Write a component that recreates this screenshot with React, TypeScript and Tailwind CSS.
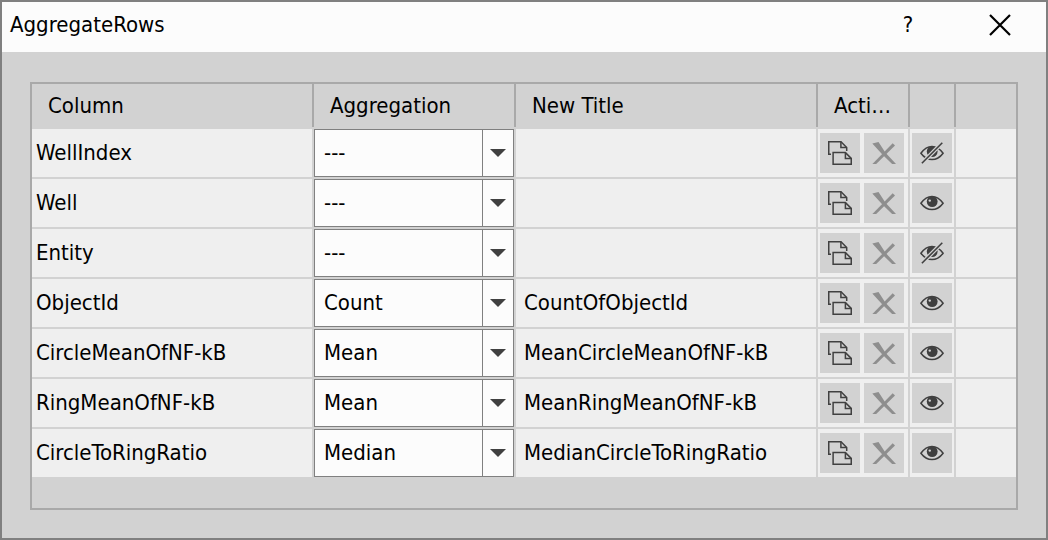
import { useState } from "react";

type Row = { column: string; aggregation: string; title: string; visible: boolean };

const OPTIONS = ["---", "Count", "Mean", "Median"];

const INITIAL_ROWS: Row[] = [
  { column: "WellIndex", aggregation: "---", title: "", visible: false },
  { column: "Well", aggregation: "---", title: "", visible: true },
  { column: "Entity", aggregation: "---", title: "", visible: false },
  { column: "ObjectId", aggregation: "Count", title: "CountOfObjectId", visible: true },
  { column: "CircleMeanOfNF-kB", aggregation: "Mean", title: "MeanCircleMeanOfNF-kB", visible: true },
  { column: "RingMeanOfNF-kB", aggregation: "Mean", title: "MeanRingMeanOfNF-kB", visible: true },
  { column: "CircleToRingRatio", aggregation: "Median", title: "MedianCircleToRingRatio", visible: true },
];

const HEADERS = ["Column", "Aggregation", "New Title", "Acti…", "", ""];

function CopyIcon() {
  return (
    <svg viewBox="0 0 24 24" className="size-6" fill="none" stroke="#404040" strokeWidth="1.5" aria-hidden="true">
      <path d="M3 13.2H.75V.75H13L18.7 6.6V10" />
      <path d="M12.9.75V6.6H18.7" />
      <path d="M5.1 11.6H17.4L23.25 17.4V23.25H5.1Z" />
      <path d="M17.4 11.6V17.4H23.25" />
    </svg>
  );
}

function DeleteIcon() {
  return (
    <svg viewBox="0 0 24 24" className="size-6" fill="#8e8e8e" aria-hidden="true">
      <path d="M.3 2.4 6.5 1 13.3 11.6 24 23H20.1L10.6 13.8Z" />
      <path d="M20.7 2.2 23 4.5 4.2 23H.4Z" />
    </svg>
  );
}

function EyeIcon({ crossed }: { crossed: boolean }) {
  return (
    <svg viewBox="0 0 24 24" className="size-6" fill="none" aria-hidden="true">
      <path
        d="M.9 12.2C4.2 7.6 8 5.4 12 5.4S19.8 7.6 23.1 12.2C19.8 16.6 16 18.6 12 18.6S4.2 16.6.9 12.2Z"
        stroke="#404040"
        strokeWidth="1.5"
      />
      <circle cx="12.2" cy="10.6" r="5.4" fill="#404040" />
      {crossed ? (
        <>
          <path d="M22.3 1.7 1.9 22.3" stroke="#d2d2d2" strokeWidth="4" />
          <path d="M22.3 1.7 1.9 22.3" stroke="#404040" strokeWidth="1.6" />
        </>
      ) : (
        <circle cx="9.8" cy="9.6" r="1.2" fill="#d2d2d2" />
      )}
    </svg>
  );
}

const iconButton = "flex size-10 items-center justify-center bg-[#d2d2d2]";

export default function App() {
  const [rows, setRows] = useState(INITIAL_ROWS);
  const update = (index: number, patch: Partial<Row>) =>
    setRows(rows.map((row, i) => (i === index ? { ...row, ...patch } : row)));

  return (
    <div className="flex min-h-screen flex-col border-2 border-[#808080] bg-[#d2d2d2] font-['DejaVu_Sans_Condensed','Noto_Sans',sans-serif] text-[22px] leading-7 text-black">
      <header className="flex h-[50px] items-center bg-[#fcfcfc] pb-1 pl-2">
        <h1 className="flex-1">AggregateRows</h1>
        <button type="button" aria-label="Help" className="flex h-full w-[92px] items-center justify-center">
          ?
        </button>
        <button type="button" aria-label="Close" className="flex h-full w-[92px] items-center justify-center">
          <svg viewBox="0 0 22 22" className="size-[22px]" stroke="#000" strokeWidth="2.2" aria-hidden="true">
            <path d="M1 1 21 21M21 1 1 21" />
          </svg>
        </button>
      </header>

      <main className="flex flex-1 flex-col px-7 pt-[30px] pb-7">
        <div className="flex-1 border-2 border-[#a9a9a9]">
          <table className="w-full table-fixed border-separate border-spacing-0">
            <colgroup>
              <col className="w-[282px]" />
              <col className="w-[202px]" />
              <col />
              <col className="w-[92px]" />
              <col className="w-[46px]" />
              <col className="w-[60px]" />
            </colgroup>
            <thead>
              <tr>
                {HEADERS.map((label, i) => (
                  <th key={i} scope="col" className="h-[45px] p-0 pb-0.5 text-left font-normal">
                    <div
                      className={
                        i < HEADERS.length - 1
                          ? "flex h-[43px] items-center border-r-2 border-[#a9a9a9] pl-4"
                          : "h-[43px]"
                      }
                    >
                      {label}
                    </div>
                  </th>
                ))}
              </tr>
            </thead>
            <tbody className="bg-[#efefef] [&_td]:border-[#d2d2d2] [&_td]:p-0 [&_td:not(:last-child)]:border-r-2 [&_tr:not(:last-child)>td]:border-b-2">
              {rows.map((row, i) => (
                <tr key={row.column}>
                  <td>
                    <div className="pl-1">{row.column}</div>
                  </td>
                  <td>
                    <div className="relative h-12">
                      <select
                        aria-label={`Aggregation for ${row.column}`}
                        value={row.aggregation}
                        onChange={(e) => update(i, { aggregation: e.target.value })}
                        className="size-full appearance-none border border-[#808080] bg-[#fcfcfc] pr-9 pl-[9px]"
                      >
                        {OPTIONS.map((option) => (
                          <option key={option}>{option}</option>
                        ))}
                      </select>
                      <span className="pointer-events-none absolute inset-y-px right-px flex w-[31px] items-center justify-center border-l border-[#808080]">
                        <svg viewBox="0 0 16 8" className="h-2 w-4" fill="#404040" aria-hidden="true">
                          <path d="M0 0H16L8 8Z" />
                        </svg>
                      </span>
                    </div>
                  </td>
                  <td>
                    <div className="pl-2">{row.title}</div>
                  </td>
                  <td>
                    <div className="flex gap-1 pl-0.5">
                      <button type="button" aria-label={`Duplicate ${row.column}`} className={iconButton}>
                        <CopyIcon />
                      </button>
                      <button type="button" disabled aria-label={`Delete ${row.column}`} className={iconButton}>
                        <DeleteIcon />
                      </button>
                    </div>
                  </td>
                  <td>
                    <div className="pl-0.5">
                      <button
                        type="button"
                        aria-label={`Show ${row.column}`}
                        aria-pressed={row.visible}
                        onClick={() => update(i, { visible: !row.visible })}
                        className={iconButton}
                      >
                        <EyeIcon crossed={!row.visible} />
                      </button>
                    </div>
                  </td>
                  <td></td>
                </tr>
              ))}
            </tbody>
          </table>
        </div>
      </main>
    </div>
  );
}
